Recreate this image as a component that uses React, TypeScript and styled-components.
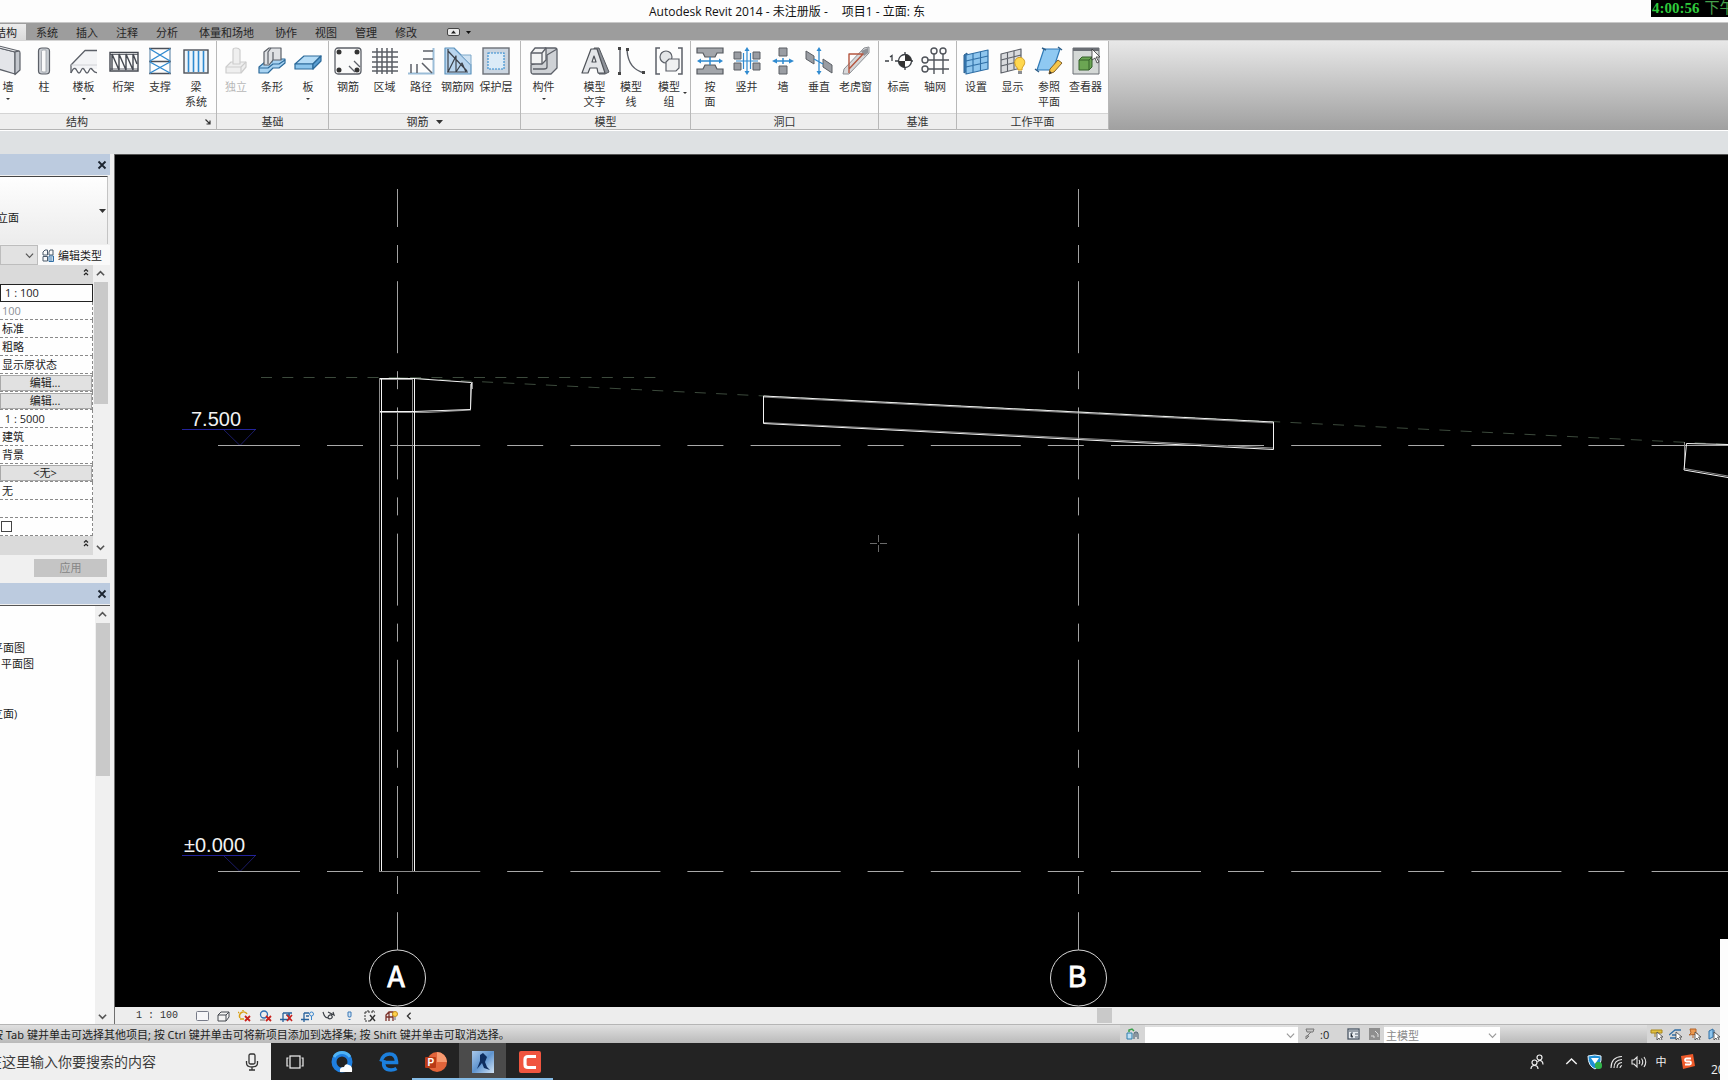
import React from "react";
import styled, { createGlobalStyle, css } from "styled-components";

const SANS = `"Open Sans", "Noto Sans CJK SC", sans-serif`;

const GlobalStyle = createGlobalStyle`
  *, *::before, *::after { box-sizing: border-box; }
  body { margin: 0; overflow: hidden; background: #dee1e3; }
  button, input, select { font: inherit; color: inherit; margin: 0; padding: 0; border: 0; border-radius: 0; background: none; }
  svg { display: block; flex: none; }
  ul, h1, h2 { margin: 0; padding: 0; list-style: none; font: inherit; }
`;

/* ---------- shell ---------- */

const Shell = styled.div`
  position: relative;
  display: grid;
  grid-template-rows: 23px 18px 90px 23px minmax(0, 1fr) 19px 37px;
  grid-template-columns: minmax(0, 1fr);
  height: 100vh;
  overflow: hidden;
  font-family: ${SANS};
  font-size: 11px;
  line-height: 15px;
  color: #333;
`;

const TitleBar = styled.header`
  display: flex;
  justify-content: center;
  align-items: center;
  gap: 14px;
  padding-right: 154px;
  background: #fdfdfd;
  border-bottom: 1px solid #c8c8c8;
  color: #111;
  font-size: 12px;
`;

const Clock = styled.div`
  position: absolute;
  top: 0;
  right: 0;
  width: 77px;
  height: 17px;
  padding-left: 1px;
  overflow: hidden;
  white-space: nowrap;
  background: #000;
  color: #2fcb3c;
  font: bold 15px/17px "Liberation Serif", "Noto Sans CJK SC", serif;
  span { margin-left: 5px; font-weight: 400; color: #46a04c; }
`;

const SideStrip = styled.div`
  position: absolute;
  right: 0;
  bottom: 0;
  width: 8px;
  height: 141px;
  background: #fdfdfd;
`;

/* ---------- ribbon tabs ---------- */

const Tabs = styled.nav`
  display: flex;
  align-items: flex-end;
  background: #9d9d9d;
  border-bottom: 1px solid #d5d5d5;
`;

const Tab = styled.button<{ $active?: boolean; $wide?: boolean }>`
  height: 16px;
  line-height: 15px;
  padding: 0 ${(p) => (p.$wide ? 12 : 9)}px;
  white-space: nowrap;
  color: #262626;
  ${(p) =>
    p.$active &&
    css`
      margin-left: -14px;
      margin-right: 1px;
      background: linear-gradient(#ececec, #dadada);
    `}
`;

const MinimizeButton = styled.button`
  display: flex;
  align-items: center;
  gap: 6px;
  height: 16px;
  padding-left: 21px;
`;

/* ---------- ribbon ---------- */

const Ribbon = styled.div`
  display: flex;
  overflow: hidden;
  background: linear-gradient(#e8e8e8, #a0a0a0);
  border-bottom: 1px solid #fff;
`;

const PanelBox = styled.section<{ $bleed?: boolean }>`
  display: flex;
  flex-direction: column;
  border-right: 1px solid #b8b8b8;
  background: #fdfdfd;
  ${(p) => p.$bleed && css`margin-left: -62px;`}
`;

const PanelBody = styled.div<{ $width: number; $end?: boolean }>`
  display: flex;
  justify-content: ${(p) => (p.$end ? "flex-end" : "flex-start")};
  width: ${(p) => p.$width}px;
  height: 72px;
  padding: 6px ${(p) => (p.$end ? 2 : 1)}px 0 1px;
`;

const PanelTitle = styled.h2`
  display: grid;
  grid-template-columns: 1fr auto 1fr;
  align-items: center;
  height: 17px;
  border-top: 1px solid #d4d4d4;
  border-bottom: 1px solid #b4b4b4;
  background: #eeeeee;
  > svg { justify-self: end; margin-right: 5px; }
`;

const PanelName = styled.span`
  display: flex;
  align-items: center;
  gap: 7px;
`;

const Tool = styled.button<{ $width: number; $dim?: boolean }>`
  position: relative;
  display: flex;
  flex: none;
  flex-direction: column;
  align-items: center;
  justify-content: flex-start;
  width: ${(p) => p.$width}px;
  white-space: pre;
  text-align: center;
  ${(p) => p.$dim && css`opacity: 0.35;`}
  > svg:first-child { margin-bottom: 4px; }
`;

const SideArrow = styled.span`
  position: absolute;
  right: 2px;
  top: 45px;
`;

const ArrowHolder = styled.span`
  display: block;
  padding-top: 4px;
`;

const Divider = styled.span`
  width: 1px;
  height: 64px;
  margin: 0 5px 0 6px;
  background: #cfcfcf;
`;

const OptionsBar = styled.div`
  background: #dee1e3;
`;

/* ---------- workspace ---------- */

const Workspace = styled.main`
  display: grid;
  grid-template-columns: 114px minmax(0, 1fr);
  min-height: 0;
`;

const Palettes = styled.aside`
  display: flex;
  flex-direction: column;
  min-height: 0;
  padding-right: 4px;
  background: #f0f0f0;
  color: #1c1c1c;
`;

const PaletteHeader = styled.div`
  display: flex;
  flex: none;
  justify-content: flex-end;
  align-items: center;
  height: 21px;
  padding-right: 3px;
  background: #bccbdf;
`;

const PlainButton = styled.button`
  display: flex;
  align-items: center;
  justify-content: center;
`;

const TypeSelector = styled.button`
  display: flex;
  flex: none;
  align-items: center;
  justify-content: space-between;
  height: 68px;
  margin: 1px 2px 0 0;
  padding: 0 1px 0 0;
  overflow: hidden;
  border-top: 1px solid #444;
  border-right: 1px solid #c4c4c4;
  background: linear-gradient(#fefefe, #ececec);
  span { margin: 14px 0 0 -3px; }
`;

const TypeRow = styled.div`
  display: flex;
  flex: none;
  height: 20px;
  margin-top: 1px;
`;

const SelectBox = styled.span<{ $width: number; $grey?: boolean }>`
  display: grid;
  flex: none;
  width: ${(p) => p.$width}px;
  align-items: center;
  background: ${(p) => (p.$grey ? "#e2e2e2" : "#fefefe")};
  border: ${(p) => (p.$grey ? "1px solid #bdbdbd" : "0")};
  color: #8a8a8a;
  select {
    grid-area: 1 / 1;
    width: 100%;
    height: 100%;
    padding-left: 2px;
    appearance: none;
  }
  svg { grid-area: 1 / 1; justify-self: end; margin-right: 3px; pointer-events: none; }
`;

const EditType = styled.button`
  display: flex;
  align-items: center;
  gap: 4px;
  flex: 1;
  padding-left: 4px;
  white-space: nowrap;
  background: #fafafa;
`;

const PropertyArea = styled.div`
  display: grid;
  flex: none;
  grid-template-columns: 93px 15px;
`;

const GroupBar = styled.button`
  display: flex;
  align-items: center;
  justify-content: flex-end;
  width: 100%;
  height: 19px;
  padding: 0 4px 5px 0;
  background: #dadada;
`;

const PropertyTable = styled.table`
  width: 100%;
  border-collapse: separate;
  border-spacing: 0;
  background: #fefefe;
  table-layout: fixed;
`;

const ValueCell = styled.td<{ $focused?: boolean; $dim?: boolean }>`
  height: 18px;
  padding: 0 0 0 2px;
  line-height: 16px;
  white-space: nowrap;
  border-bottom: 1px dashed #8a8a8a;
  border-right: 1px dashed #8a8a8a;
  color: ${(p) => (p.$dim ? "#8b8f96" : "#1c1c1c")};
  ${(p) =>
    p.$focused &&
    css`
      padding-left: 4px;
      border: 1px solid #222;
    `}
  button {
    display: block;
    width: 92px;
    height: 16px;
    margin-left: -2px;
    padding-right: 2px;
    line-height: 13px;
    border: 1px solid #a9a9a9;
    background: #e1e1e1;
  }
  input {
    display: block;
    width: 11px;
    height: 11px;
    margin-left: -1px;
    appearance: none;
    border: 1px solid #444;
    background: #fff;
  }
`;

const Scroll = styled.div<{ $thumb: number }>`
  display: flex;
  flex-direction: column;
  justify-content: space-between;
  align-items: center;
  padding: 4px 0 3px;
  background: #f0f0f0;
  i {
    width: 14px;
    height: ${(p) => p.$thumb}px;
    margin: 4px 0 auto;
    background: #c9c9c9;
  }
`;

const ApplyRow = styled.div`
  display: flex;
  flex: none;
  justify-content: flex-end;
  padding: 3px 3px 6px 0;
  margin-top: 1px;
  button {
    width: 73px;
    height: 18px;
    line-height: 16px;
    background: #c5c5c5;
    color: #868686;
  }
`;

const Browser = styled.div`
  display: grid;
  flex: 1;
  grid-template-columns: minmax(0, 1fr) 15px;
  min-height: 0;
  margin-top: 1px;
  border-top: 1px solid #555;
  background: #fefefe;
`;

const Tree = styled.ul`
  padding-top: 34px;
  overflow: hidden;
  white-space: nowrap;
`;

const TreeItem = styled.li<{ $shift: number; $gap?: boolean }>`
  height: 16px;
  margin-left: ${(p) => p.$shift}px;
  margin-top: ${(p) => (p.$gap ? 34 : 0)}px;
  line-height: 16px;
`;

const ViewArea = styled.div`
  display: grid;
  grid-template-rows: minmax(0, 1fr) 17px;
  min-height: 0;
  border-left: 1px solid #6f6f6f;
`;

const Canvas = styled.svg`
  width: 100%;
  height: 100%;
  border-top: 1px solid #555;
  background: #000;
`;

const ViewBar = styled.div`
  display: flex;
  align-items: center;
  padding-left: 21px;
  background: #ededed;
`;

const ScaleButton = styled.button`
  width: 56px;
  text-align: left;
  white-space: pre;
  font: 10px/14px "Liberation Mono", monospace;
`;

const ViewButton = styled.button<{ $narrow?: boolean }>`
  display: flex;
  justify-content: center;
  align-items: center;
  width: ${(p) => (p.$narrow ? 13 : 21)}px;
  height: 16px;
`;

const HScroll = styled.div`
  flex: 1;
  height: 15px;
  padding-left: 682px;
  i { display: block; width: 15px; height: 15px; background: #c9c9c9; }
`;

/* ---------- status bar ---------- */

const StatusBar = styled.footer`
  display: flex;
  align-items: stretch;
  border-top: 1px solid #b5b5b5;
  background: linear-gradient(#e0e0e0, #bababa);
  color: #1c1c1c;
`;

const Hint = styled.span`
  flex: 1;
  margin-left: -8px;
  font-family: "Noto Sans", "Noto Sans CJK SC", sans-serif;
  line-height: 19px;
  white-space: nowrap;
`;

const StatusTools = styled.div`
  display: flex;
  align-items: center;
  padding-right: 5px;
`;

const StatusButton = styled.button<{ $width?: number; $start?: boolean }>`
  display: flex;
  justify-content: ${(p) => (p.$start ? "flex-start" : "center")};
  align-items: center;
  gap: 4px;
  width: ${(p) => p.$width ?? 19}px;
  height: 18px;
  padding-left: ${(p) => (p.$start ? 5 : 0)}px;
  background: #d6d6d6;
`;

const StatusSelect = styled(SelectBox)`
  height: 16px;
  align-self: flex-end;
`;

const Spacer = styled.span`
  width: 147px;
`;

/* ---------- taskbar ---------- */

const Taskbar = styled.div`
  display: flex;
  background: #232323;
  overflow: hidden;
`;

const Search = styled.label`
  display: flex;
  align-items: center;
  width: 271px;
  padding-right: 12px;
  background: #efefef;
  input {
    flex: 1;
    min-width: 0;
    margin-left: -12px;
    font-size: 14px;
    line-height: 20px;
    outline: 0;
  }
  input::placeholder { color: #3b3b3b; opacity: 1; }
`;

const TaskButton = styled.button<{ $active?: boolean; $running?: boolean }>`
  display: flex;
  justify-content: center;
  align-items: center;
  width: 47px;
  border-top: 2px solid transparent;
  background: ${(p) => (p.$active ? "#4b4b4b" : "transparent")};
  border-bottom: 2px solid ${(p) => (p.$running ? "#86bce6" : "transparent")};
`;

const Tray = styled.div`
  display: flex;
  align-items: center;
  margin-left: auto;
  color: #f0f0f0;
`;

const TrayButton = styled.button<{ $width: number }>`
  display: flex;
  justify-content: center;
  align-items: center;
  width: ${(p) => p.$width}px;
  height: 36px;
`;

const DateText = styled.span`
  align-self: flex-end;
  width: 17px;
  margin-left: 9px;
  overflow: hidden;
  font-size: 12px;
  line-height: 20px;
`;

/* ---------- small glyphs ---------- */

const Caret = ({ w = 5, color = "#333" }: { w?: number; color?: string }) => (
  <svg width={w} height={Math.ceil(w / 2)} viewBox="0 0 10 5" preserveAspectRatio="none">
    <path d="M0 0H10L5 5Z" fill={color} />
  </svg>
);

const Chevron = ({ dir = "down", size = 9, color = "#555", sw = 1.3 }: { dir?: string; size?: number; color?: string; sw?: number }) => {
  const d: Record<string, string> = {
    down: "M1 3L5 7L9 3",
    up: "M1 7L5 3L9 7",
    left: "M7 1L3 5L7 9",
  };
  return (
    <svg width={size} height={size} viewBox="0 0 10 10" fill="none" stroke={color} strokeWidth={sw}>
      <path d={d[dir]} />
    </svg>
  );
};

const Cross = () => (
  <svg width="10" height="10" viewBox="0 0 10 10" stroke="#1b2430" strokeWidth="1.8">
    <path d="M1.5 1.5L8.5 8.5M8.5 1.5L1.5 8.5" />
  </svg>
);

const DoubleUp = () => (
  <svg width="6" height="8" viewBox="0 0 6 8" fill="none" stroke="#222" strokeWidth="1.2">
    <path d="M1 3.5L3 1.5L5 3.5M1 7L3 5L5 7" />
  </svg>
);

/* ---------- ribbon icons ---------- */

const G = "#5c6068";
const B = "#2f8ad0";
const icons: Record<string, React.ReactNode> = {
  wall: (
    <g stroke={G} strokeWidth="1.2" strokeLinejoin="round">
      <path d="M1 0L21 5V27L1 21Z" fill="#e3e5e9" />
      <path d="M1 0L5 -1L25 4L21 5Z" fill="#f6f7f8" />
      <path d="M21 5L25 4Q26 4 26 6V23L21 27.5Z" fill="#c3c7cd" />
    </g>
  ),
  column: (
    <g stroke={G} strokeWidth="1.2">
      <path d="M8.500 4Q8.500 1 12 1H16Q19.500 1 19.500 4V24Q19.500 27 16 27H12Q8.500 27 8.500 24Z" fill="#c9cdd2" />
      <path d="M11.500 4.500Q11.500 3 13 3H16V25H13Q11.500 25 11.500 23.500Z" fill="#fafafa" stroke="#9a9ea5" strokeWidth="0.8" />
    </g>
  ),
  floor: (
    <g stroke={G} strokeWidth="1.3" fill="none" strokeLinejoin="round">
      <path d="M15 4L2 18V22H27V4Z" fill="#f3f4f6" stroke="none" />
      <path d="M27 3.5H15L1 18V26" />
      <path d="M1 26C2 24 3 21 5 21.500S7 26 9 26S11 21 13 21.500S15 26 17 26S19 21 21 21.500S23 26 27 25.500" />
      <path d="M1 18H27" stroke="#c6c9ce" strokeWidth="0.8" />
    </g>
  ),
  truss: (
    <g stroke="#444850" strokeWidth="1.4" fill="none">
      <path d="M0 5.500H28V24H0Z" fill="#fafafa" />
      <path d="M0 7.500H28M0 22H28" strokeWidth="0.8" />
      <path d="M2 7L9 23V7L16 23V7L23 23V7L27 17M2 7V23" />
    </g>
  ),
  brace: (
    <g fill="none">
      <path d="M3 1.5H25M3 14.5H25M3 26.5H25" stroke="#4b5058" strokeWidth="1.5" />
      <path d="M4 1V27M24 1V27" stroke="#6b90b0" strokeWidth="1.2" />
      <path d="M4 2L24 14M24 2L4 14M4 15L24 26M24 15L4 26" stroke={B} strokeWidth="1.4" />
    </g>
  ),
  beamSystem: (
    <g fill="none">
      <rect x="2" y="3" width="24" height="23" fill="#eef5fb" stroke="#4b5058" strokeWidth="1.4" />
      <path d="M6.5 4V25M11.5 4V25M16.5 4V25M21.5 4V25" stroke={B} strokeWidth="1.6" />
    </g>
  ),
  isolated: (
    <g stroke="#777" strokeWidth="1.2" fill="#d8d8d8" strokeLinejoin="round">
      <path d="M4 20L9 15H24V20L19 26H4Z" />
      <path d="M4 20H19L24 15M19 20V26" fill="none" />
      <path d="M11 3Q11 1 14 1T18 3V17H11Z" />
    </g>
  ),
  strip: (
    <g strokeWidth="1.2" strokeLinejoin="round">
      <path d="M1 20L7 15H14V12H27V16L21 21H15L10 26H1Z" fill="#a8d3f2" stroke="#2c6a9a" />
      <path d="M1 21H10L15 17H21L27 13" fill="none" stroke="#2c6a9a" />
      <path d="M6 5L11 1H23V13H15L11 18H6Z" fill="#dfe1e4" stroke={G} />
      <path d="M13 1L10 5V17M15 5V13" fill="none" stroke={G} />
    </g>
  ),
  slab: (
    <g stroke="#2c6a9a" strokeWidth="1.2" strokeLinejoin="round">
      <path d="M1 17L10 9H27L19 17Z" fill="#b5dcf6" />
      <path d="M1 17H19V22H1Z" fill="#8cc5ec" />
      <path d="M19 17L27 9V14L19 22Z" fill="#5b9fd2" />
    </g>
  ),
  rebar: (
    <g stroke={G} strokeWidth="1.3" fill="none">
      <rect x="1" y="1" width="26" height="26" rx="3" fill="#fafafa" />
      <g fill="#333" stroke="none">
        <circle cx="5" cy="5" r="2.5" /><circle cx="23" cy="5" r="2.5" />
        <circle cx="5" cy="23" r="2.5" /><circle cx="23" cy="23" r="2.5" />
      </g>
      <path d="M15 19L21 25M20 14L26 20" />
    </g>
  ),
  area: (
    <path d="M6 1V27M11 1V27M16 1V27M21 1V27M1 5H27M1 10H27M1 15H27M1 20H27M1 24H27" stroke="#5b5f66" strokeWidth="1.5" />
  ),
  path: (
    <g fill="none">
      <path d="M26.5 1V26.5H1" stroke="#9bbdd8" strokeWidth="2" />
      <path d="M4 17V26M10 17V26M16 4H26M16 12H26M15 16L25 26" stroke={G} strokeWidth="1.5" />
    </g>
  ),
  fabric: (
    <g strokeLinejoin="round">
      <path d="M1 1H10L27 18V27H1Z" fill="#b9d5ee" stroke="#5d93bd" strokeWidth="1.2" />
      <path d="M17 8H27V18Z" fill="#cfe2f2" stroke="#7fa9ca" />
      <path d="M4 2V25M4 4L23 24M4 25L12 9V25L18 16L22 25M3 25H24" stroke="#3b4049" strokeWidth="1.2" fill="none" />
    </g>
  ),
  cover: (
    <g>
      <rect x="1" y="1" width="26" height="26" fill="#cbd5e0" stroke="#6c7077" strokeWidth="1.4" />
      <rect x="6" y="6" width="16" height="16" fill="#dcebf7" stroke={B} strokeWidth="1.1" strokeDasharray="2 1" />
    </g>
  ),
  component: (
    <g stroke={G} strokeWidth="1.3" strokeLinejoin="round">
      <path d="M13 5Q13 1 17 1H25Q27 1 27 3V21L21 27H3Q1 27 1 24V18L13 14Z" fill="#cfd2d6" />
      <path d="M1 6L5 1H16V13L12 17H1Z" fill="#f2f3f4" />
      <path d="M1 6H12V17M12 6L16 1M17 8L27 2M17 8V20Q17 22 14 22H3" fill="none" />
    </g>
  ),
  modelText: (
    <g strokeLinejoin="round">
      <path d="M13 1H18L28 25L24 27H18Z" fill="#8e9299" stroke="#55595f" />
      <path d="M10 2H16L24 26H17L16 21H9L7 26H1ZM11 15H15L13 9Z" fill="#e3e5e8" stroke="#4d5157" strokeWidth="1.2" fillRule="evenodd" />
    </g>
  ),
  modelLine: (
    <g fill="none" stroke={G} strokeWidth="1.4">
      <path d="M3 2V26M10 3C11 17 17 23 27 26" />
      <g fill="#444" stroke="none">
        <rect x="1" y="0" width="3" height="3" /><rect x="1" y="25" width="3" height="3" />
        <rect x="9" y="1" width="3" height="3" /><rect x="25" y="24" width="3" height="3" />
      </g>
    </g>
  ),
  modelGroup: (
    <g fill="none" stroke={G} strokeWidth="1.5">
      <path d="M5 1H1V27H5M23 1H27V27H23" />
      <circle cx="11" cy="10" r="6" fill="#e4e6e8" strokeWidth="1.2" />
      <path d="M11 15L14 12H24V21L21 24H11Z" fill="#f0f1f2" strokeWidth="1.2" />
    </g>
  ),
  byFace: (
    <g>
      <path d="M1 1H27V6H21L19 10H9L7 6H1ZM1 27H27V22H21L19 18H9L7 22H1Z" fill="#a3a6ab" stroke="#55595f" strokeWidth="1.2" />
      <path d="M3 14H25M14 10V18" stroke={B} strokeWidth="1.5" />
      <path d="M1 14L5 11.5V16.5ZM27 14L23 11.5V16.5Z" fill={B} />
    </g>
  ),
  shaft: (
    <g>
      <path d="M1 5H8V12H1ZM20 5H27V12H20ZM1 16H8V23H1ZM20 16H27V23H20Z" fill="#9a9da3" stroke="#5a5e64" />
      <path d="M14 2V26M3 14H25M10.5 6V22M17.5 6V22" stroke={B} strokeWidth="1.2" />
      <path d="M14 0L11.5 4H16.5ZM14 28L11.5 24H16.5Z" fill={B} />
    </g>
  ),
  wallOpening: (
    <g>
      <path d="M10 1H18V9H10ZM10 19H18V27H10Z" fill="#9a9da3" stroke="#5a5e64" />
      <path d="M5 14H23M14 11V17" stroke={B} strokeWidth="1.5" />
      <path d="M3 14L8 11.5V16.5ZM25 14L20 11.5V16.5Z" fill={B} />
    </g>
  ),
  vertical: (
    <g>
      <path d="M1 4L9 9V17L1 12ZM18 12L27 18V26L18 20Z" fill="#9a9da3" stroke="#5a5e64" />
      <path d="M14 3V25M9 12L18 17" stroke={B} strokeWidth="1.3" />
      <path d="M14 0L11.5 4H16.5ZM14 28L11.5 24H16.5Z" fill={B} />
    </g>
  ),
  dormer: (
    <g strokeLinejoin="round">
      <path d="M1 27L2 22L22 1L27 0V6L7 27Z" fill="#d7d8da" stroke="#8b8e93" />
      <path d="M19 4L26 1V6L22 9Z" fill="#8f9298" />
      <path d="M7 26V7H21L7 22" fill="none" stroke="#b4553f" strokeWidth="1.4" />
    </g>
  ),
  level: (
    <g stroke="#3c4046" strokeWidth="1.3">
      <path d="M0 14H4M10 14H28M20 5V23" />
      <path d="M5 10L7 8.5V14" fill="none" />
      <circle cx="20" cy="14" r="6.5" fill="#fff" />
      <path d="M20 14V7.5A6.5 6.5 0 0 1 26.5 14ZM20 14V20.5A6.5 6.5 0 0 1 13.5 14Z" fill="#333" stroke="none" />
    </g>
  ),
  grid: (
    <g fill="none" stroke="#50545b" strokeWidth="1.4">
      <path d="M13 7V27M22 7V27M7 13H28M7 22H28" />
      <circle cx="13" cy="4" r="3" /><circle cx="22" cy="4" r="3" />
      <circle cx="4" cy="13" r="3" /><circle cx="4" cy="22" r="3" />
    </g>
  ),
  planeSet: (
    <g strokeLinejoin="round">
      <path d="M2 8L5 6V24L2 26Z" fill="#3c7fb8" stroke="#2a5f8e" />
      <path d="M4 8L26 3V22L4 27Z" fill="#8fc6ee" stroke="#2f6ea5" strokeWidth="1.2" />
      <path d="M11 6V25M18.5 5V24M4 14L26 9M4 20L26 15" stroke="#2f6ea5" strokeWidth="1.1" />
    </g>
  ),
  planeShow: (
    <g strokeLinejoin="round">
      <path d="M2 7L22 2V21L2 26Z" fill="#d9dbde" stroke="#5c6068" strokeWidth="1.2" />
      <path d="M8.5 5V24M15 4V22M2 13L22 8M2 19L22 14" stroke="#5c6068" strokeWidth="1.1" />
      <path d="M16 17A5 5 0 1 1 25 18C24 20 23 20 23 23H19C19 20 16 20 16 17Z" fill="#ffd84f" stroke="#d29d22" />
      <path d="M19 24H23V27H19Z" fill="#8b8e93" />
    </g>
  ),
  refPlane: (
    <g strokeLinejoin="round">
      <path d="M9 2H25L18 23H2Z" fill="#8fc9f2" stroke="#2f79b5" strokeWidth="1.2" />
      <path d="M7 1L11 3M23 0L27 3M0 22L4 25" stroke="#2f5f88" strokeWidth="1.4" />
      <path d="M14 27L15 22L23 13L27 16L19 25Z" fill="#f6c64a" stroke="#80602a" />
      <path d="M14 27L15 24L17 26Z" fill="#333" />
    </g>
  ),
  viewer: (
    <g strokeLinejoin="round">
      <rect x="1" y="1" width="26" height="26" fill="#d4d8d6" stroke="#6a6e74" />
      <path d="M1 1H27V4H1Z" fill="#6a6e74" />
      <path d="M7 13L10 10H20V20L17 23H7Z" fill="#6ba553" stroke="#35602a" />
      <path d="M7 13H17V23M17 13L20 10" fill="none" stroke="#35602a" />
      <path d="M20 2L28 10H24L27 15L25 16L23 11L20 13Z" fill="#fff" stroke="#333" strokeWidth="0.8" />
    </g>
  ),
};

type ToolDef = { icon: string; label: string; w?: number; arrow?: boolean; side?: boolean; dim?: boolean; divide?: boolean };

const ToolButton = ({ t }: { t: ToolDef }) => (
  <>
    <Tool $width={t.w ?? 36} $dim={t.dim} disabled={t.dim}>
      <svg width="28" height="28" viewBox="0 0 28 28" overflow="visible">{icons[t.icon]}</svg>
      {t.label}
      {t.arrow && <ArrowHolder><Caret w={4} /></ArrowHolder>}
      {t.side && <SideArrow><Caret w={4} /></SideArrow>}
    </Tool>
    {t.divide && <Divider />}
  </>
);

const panels: { title: string; width: number; bleed?: boolean; corner?: boolean; menu?: boolean; tools: ToolDef[] }[] = [
  {
    title: "结构", width: 278, bleed: true, corner: true,
    tools: [
      { icon: "wall", label: "墙", w: 36, arrow: true },
      { icon: "column", label: "柱", w: 36 },
      { icon: "floor", label: "楼板", w: 43, arrow: true },
      { icon: "truss", label: "桁架", w: 37 },
      { icon: "brace", label: "支撑" },
      { icon: "beamSystem", label: "梁\n系统" },
    ],
  },
  {
    title: "基础", width: 111,
    tools: [
      { icon: "isolated", label: "独立", dim: true },
      { icon: "strip", label: "条形" },
      { icon: "slab", label: "板", arrow: true },
    ],
  },
  {
    title: "钢筋", width: 191, menu: true,
    tools: [
      { icon: "rebar", label: "钢筋" },
      { icon: "area", label: "区域", w: 37 },
      { icon: "path", label: "路径" },
      { icon: "fabric", label: "钢筋网", w: 37 },
      { icon: "cover", label: "保护层", w: 40 },
    ],
  },
  {
    title: "模型", width: 169,
    tools: [
      { icon: "component", label: "构件", w: 43, arrow: true, divide: true },
      { icon: "modelText", label: "模型\n文字", w: 37 },
      { icon: "modelLine", label: "模型\n线" },
      { icon: "modelGroup", label: "模型\n组", w: 40, side: true },
    ],
  },
  {
    title: "洞口", width: 187,
    tools: [
      { icon: "byFace", label: "按\n面" },
      { icon: "shaft", label: "竖井", w: 37 },
      { icon: "wallOpening", label: "墙" },
      { icon: "vertical", label: "垂直" },
      { icon: "dormer", label: "老虎窗", w: 37 },
    ],
  },
  {
    title: "基准", width: 77,
    tools: [
      { icon: "level", label: "标高", w: 37 },
      { icon: "grid", label: "轴网" },
    ],
  },
  {
    title: "工作平面", width: 151,
    tools: [
      { icon: "planeSet", label: "设置" },
      { icon: "planeShow", label: "显示", w: 37 },
      { icon: "refPlane", label: "参照\n平面" },
      { icon: "viewer", label: "查看器", w: 37 },
    ],
  },
];

const tabs = ["系统", "插入", "注释", "分析", "体量和场地", "协作", "视图", "管理", "修改"];

/* ---------- properties ---------- */

type Row = { kind: "text" | "button" | "check"; value: string; focused?: boolean; dim?: boolean };
const rows: Row[] = [
  { kind: "text", value: "1 : 100", focused: true },
  { kind: "text", value: "100", dim: true },
  { kind: "text", value: "标准" },
  { kind: "text", value: "粗略" },
  { kind: "text", value: "显示原状态" },
  { kind: "button", value: "编辑..." },
  { kind: "button", value: "编辑..." },
  { kind: "text", value: "\u00a01 : 5000" },
  { kind: "text", value: "建筑" },
  { kind: "text", value: "背景" },
  { kind: "button", value: "<无>" },
  { kind: "text", value: "无" },
  { kind: "text", value: "" },
  { kind: "check", value: "裁剪" },
];

const Properties = () => (
  <>
    <PaletteHeader><PlainButton aria-label="关闭"><Cross /></PlainButton></PaletteHeader>
    <TypeSelector><span>立面</span><Caret w={7} /></TypeSelector>
    <TypeRow>
      <SelectBox $width={38} $grey>
        <select aria-label="类型"><option></option></select>
        <Chevron />
      </SelectBox>
      <EditType>
        <svg width="12" height="13" viewBox="0 0 12 13" fill="none" stroke="#4b5a6b">
          <path d="M1 3L3 1H5.5V6H1ZM7 3L8 1H11V6H7ZM1 7.5H5.5V12H1Z" />
          <path d="M7 7H11.5V12.5H7ZM8 9H10.5M8 11H10.5" stroke="#2f6ea5" />
        </svg>
        编辑类型
      </EditType>
    </TypeRow>
    <PropertyArea>
      <div>
        <GroupBar aria-label="图形"><DoubleUp /></GroupBar>
        <PropertyTable>
          <tbody>
            {rows.map((r, i) => (
              <tr key={i}>
                <ValueCell $focused={r.focused} $dim={r.dim}>
                  {r.kind === "text" && r.value}
                  {r.kind === "button" && <button>{r.value}</button>}
                  {r.kind === "check" && <input type="checkbox" aria-label={r.value} />}
                </ValueCell>
              </tr>
            ))}
          </tbody>
        </PropertyTable>
        <GroupBar aria-label="范围"><DoubleUp /></GroupBar>
      </div>
      <Scroll $thumb={122}><Chevron dir="up" sw={1.8} /><i /><Chevron sw={1.8} /></Scroll>
    </PropertyArea>
    <ApplyRow><button disabled>应用</button></ApplyRow>
  </>
);

const ProjectBrowser = () => (
  <>
    <PaletteHeader><PlainButton aria-label="关闭"><Cross /></PlainButton></PaletteHeader>
    <Browser>
      <Tree>
        <TreeItem $shift={-8}>平面图</TreeItem>
        <TreeItem $shift={1}>平面图</TreeItem>
        <TreeItem $shift={-8} $gap>立面)</TreeItem>
      </Tree>
      <Scroll $thumb={153}><Chevron dir="up" sw={1.8} /><i /><Chevron sw={1.8} /></Scroll>
    </Browser>
  </>
);

/* ---------- drawing ---------- */

const LevelMark = ({ y, label, x }: { y: number; label: string; x: number }) => (
  <g>
    <text x={x} y={y - 20} fill="#f2f2f2" fontFamily="Liberation Sans, Arial, sans-serif" fontSize="20">{label}</text>
    <path d={`M182 ${y - 16.5}H256`} stroke="#23239a" />
    <path d={`M224 ${y - 16}L240 ${y - 0.5}L255 ${y - 16}`} stroke="#1b1b66" fill="none" />
    <path d={`M218 ${y - 0.5}H1900`} stroke="#a9a9a9" strokeDasharray="90 27 36 27.2" strokeDashoffset="8" />
  </g>
);

const GridLine = ({ x, label }: { x: number; label: string }) => (
  <g>
    <path d={`M${x + 0.5} 189V950`} stroke="#a2a2a2" strokeDasharray="72 18 18 18.2" strokeDashoffset="34" />
    <circle cx={x + 0.5} cy="978" r="28" fill="none" stroke="#d8d8d8" />
    <text x={x - 1} y="987" textAnchor="middle" fill="#fff" stroke="#fff" strokeWidth="0.8" fontFamily="Liberation Sans Narrow, Noto Sans CJK SC, sans-serif" fontSize="29">{label}</text>
  </g>
);

const Elevation = () => (
  <Canvas role="img" aria-label="立面: 东">
    <g transform="translate(-115 -155)">
      <path d="M261 377.5H660" stroke="#3c4a3c" strokeDasharray="11 10.3" />
      <path d="M397 377.5L1728 444.5" stroke="#3c4a3c" strokeDasharray="11 10.3" />
      <LevelMark y={446} label="7.500" x={191} />
      <LevelMark y={872} label="±0.000" x={184} />
      <GridLine x={397} label="A" />
      <GridLine x={1078} label="B" />
      <g fill="none" stroke="#8c8c8c">
        <path d="M379.5 378V871M412.5 378V871" />
        <path d="M380 379.5H412M380 412.5H428L471 410M472.5 382V389M470.5 384V409M379 871.5H480" />
        <path d="M763 397L1273 423M763 422.5L1273 448" />
        <path d="M1684.5 442V469M1684 468.5L1728 476" />
      </g>
      <g fill="none" stroke="#f4f4f4">
        <path d="M381.5 378V871M414.5 378V871" />
        <path d="M380 378.5H414L471.5 382.5L470.5 409.5L414 411.5H380" />
        <path d="M763.5 396L1273.5 422V449.5L763.5 423.5Z" />
        <path d="M1728 444.5L1686.5 443.5L1684 470L1728 477.5" />
      </g>
      <path d="M870 543.5H877M880 543.5H887M878.5 535V542M878.5 545V552" stroke="#6a6a6a" />
    </g>
  </Canvas>
);

/* ---------- view bar and status icons ---------- */

const viewIcons: { name: string; art: React.ReactNode }[] = [
  { name: "详细程度", art: <rect x="0.5" y="1.5" width="12" height="9" rx="1" fill="#f6f6f8" stroke="#777b88" /> },
  { name: "视觉样式", art: <path d="M1 5L4 2H12V7L9 11H1ZM1 5H9V11M9 5L12 2" fill="#f4f4f4" stroke="#44484f" /> },
  { name: "日光路径", art: <g fill="none"><path d="M2 8A4 4 0 1 1 9 4M2 9H6M1 3L0 2M5 0V1" stroke="#d9a015" strokeWidth="1.5" /><path d="M7 6L12 11M12 6L7 11" stroke="#c8201c" strokeWidth="1.8" /></g> },
  { name: "阴影", art: <g fill="none"><circle cx="5" cy="4.5" r="3.5" stroke="#2f6fb3" strokeWidth="1.3" /><path d="M1 10H6" stroke="#777" /><path d="M7 6L12 11M12 6L7 11" stroke="#c8201c" strokeWidth="1.8" /></g> },
  { name: "裁剪视图", art: <g fill="none"><path d="M0 9.500H9V3M3 3V12M3 3H12M6 5H10" stroke="#28629c" strokeWidth="1.3" /><path d="M7 5L12 11M12 5L7 11" stroke="#c8201c" strokeWidth="1.6" /></g> },
  { name: "显示裁剪区域", art: <g fill="none"><path d="M0 9.500H8M3 3V12M3 3H8M5 6H8" stroke="#28629c" strokeWidth="1.3" /><circle cx="10.500" cy="4" r="2" stroke="#3b86cc" /><path d="M10.500 6V10" stroke="#3b86cc" /></g> },
  { name: "临时隐藏", art: <path d="M1 2C2 6 4 8 6 8C6 5 9 4 10 6S8 10 6 8M6 2L12 5L11 2" fill="none" stroke="#3c4046" strokeWidth="1.2" /> },
  { name: "显示隐藏", art: <g fill="none" stroke="#3b78b6"><path d="M5 2H8V6L7.500 7H5.500L5 6Z" fill="#cfe3f5" /><path d="M5.5 9.500H7.5" /></g> },
  { name: "临时视图属性", art: <g fill="none" stroke="#333"><path d="M1 2H11M1 2V11H6M4 0V3M9 0V3" strokeDasharray="2 1" /><path d="M6 5L11 11M11 5L6 11" strokeWidth="1.4" /></g> },
  { name: "分析模型", art: <g fill="none"><path d="M1 11V5L4 2H8V11M4 2V11M1 7H8" stroke="#7a3028" strokeWidth="1.3" /><circle cx="10" cy="4" r="2.5" fill="#ffd34d" stroke="#c58e18" /><path d="M10 7V10" stroke="#666" /></g> },
];

const SmallIcon = ({ children }: { children: React.ReactNode }) => (
  <svg width="13" height="12" viewBox="0 0 13 12">{children}</svg>
);

const Cursor = <path d="M7 4V12L9 10L10.5 12.5L12 11.5L10.5 9H13Z" fill="#fff" stroke="#444" strokeWidth="0.8" />;

const Status = () => (
  <StatusBar>
    <Hint>按 Tab 键并单击可选择其他项目; 按 Ctrl 键并单击可将新项目添加到选择集; 按 Shift 键并单击可取消选择。</Hint>
    <StatusTools>
      <StatusButton aria-label="工作集" $width={25}>
        <SmallIcon><path d="M1 5H6V11H1Z" fill="#bfe0f4" stroke="#2f7fae" /><path d="M3 4V2L6 1L8 3" fill="none" stroke="#39a04a" strokeWidth="1.5" /><path d="M8 11V6A2 2 0 0 1 12 6V11M10 5V9" fill="none" stroke="#3f5568" /></SmallIcon>
      </StatusButton>
      <StatusSelect $width={153}>
        <select aria-label="活动工作集"><option></option></select><Chevron color="#999" />
      </StatusSelect>
      <StatusButton aria-label="可编辑项" $width={44} $start>
        <SmallIcon><path d="M3 1H11L10 4H4ZM8 4L4 8M3 8H6L3 11Z" fill="#c6c6c6" stroke="#777" /></SmallIcon>
        :0
      </StatusButton>
      <StatusButton aria-label="设计选项" $width={22}>
        <SmallIcon><rect x="1" y="1" width="11" height="10" fill="#e7ebef" stroke="#4a5664" strokeWidth="1.3" /><path d="M2 3H11M4 5H6M4 5V9H6M8 6H11M8 9H11" stroke="#4a5664" /></SmallIcon>
      </StatusButton>
      <StatusButton aria-label="添加到集" $width={20}>
        <SmallIcon><rect x="1" y="0" width="11" height="12" fill="#8e8e8e" /><path d="M3 8H6V10M7 3L10 6V9" stroke="#dedede" fill="none" /></SmallIcon>
      </StatusButton>
      <StatusSelect $width={116}>
        <select aria-label="设计选项集"><option>主模型</option></select><Chevron color="#999" />
      </StatusSelect>
      <Spacer />
      <StatusButton aria-label="选择链接"><SmallIcon><path d="M1 2H12V5H1Z" fill="#e3c23f" stroke="#a8861c" /><path d="M5 5V9" stroke="#a8861c" />{Cursor}</SmallIcon></StatusButton>
      <StatusButton aria-label="选择基线图元"><SmallIcon><path d="M0 7L6 2H12M3 7H8M1 10H7" stroke="#2f6ea5" strokeWidth="1.3" fill="none" />{Cursor}</SmallIcon></StatusButton>
      <StatusButton aria-label="选择锁定图元"><SmallIcon><path d="M2 1H8V6H10L1 7L3 5ZM5 6V10" fill="#ee9a4f" stroke="#b5652a" />{Cursor}</SmallIcon></StatusButton>
      <StatusButton aria-label="按面选择图元"><SmallIcon><path d="M2 3L6 1V9L2 11Z" fill="#8fc6ee" stroke="#2f6ea5" /><path d="M7 2V6" stroke="#2f6ea5" />{Cursor}</SmallIcon></StatusButton>
    </StatusTools>
  </StatusBar>
);

const Desktop = () => (
  <Taskbar>
    <Search>
      <input placeholder="在这里输入你要搜索的内容" aria-label="搜索" />
      <svg width="14" height="18" viewBox="0 0 14 18" fill="none" stroke="#333" strokeWidth="1.3">
        <rect x="4" y="1" width="6" height="10" rx="1.5" /><path d="M1.5 8V10Q1.5 14 7 14T12.5 10V8M7 14V17M4 17H10" />
      </svg>
    </Search>
    <TaskButton aria-label="任务视图">
      <svg width="18" height="14" viewBox="0 0 18 14" fill="none" stroke="#f2f2f2" strokeWidth="1.2">
        <rect x="4" y="1" width="10" height="12" /><path d="M2.5 3H1V11H2.5M15.5 3H17V11H15.5" />
      </svg>
    </TaskButton>
    <TaskButton aria-label="浏览器">
      <svg width="22" height="22" viewBox="0 0 22 22">
        <circle cx="11" cy="11" r="8" fill="none" stroke="#1f7fe0" strokeWidth="5" />
        <path d="M3 6A9.5 9.5 0 0 1 19 6" fill="none" stroke="#4fb3f5" strokeWidth="3" />
        <path d="M9 21Q8 16 13 16Q14 12 18 14Q22 15 21 21Z" fill="#fff" />
      </svg>
    </TaskButton>
    <TaskButton aria-label="Edge">
      <svg width="20" height="20" viewBox="0 0 20 20" fill="none" stroke="#1c7fdc" strokeWidth="3.6">
        <path d="M2 9.5Q4 2 10.5 2T17.5 9.5V10.5H6" />
        <path d="M5 8Q3 18 12 18Q15 18 17.5 16.5" />
      </svg>
    </TaskButton>
    <TaskButton aria-label="PowerPoint" $running>
      <svg width="24" height="22" viewBox="0 0 24 22">
        <circle cx="13" cy="11" r="10" fill="#e2643a" /><path d="M13 1A10 10 0 0 1 23 11H13Z" fill="#f79a70" />
        <rect x="1" y="6" width="11" height="11" rx="1" fill="#b93a17" />
        <text x="3.5" y="15" fontFamily="Liberation Sans, sans-serif" fontWeight="bold" fontSize="10" fill="#fff">P</text>
      </svg>
    </TaskButton>
    <TaskButton aria-label="Revit" $active $running>
      <svg width="22" height="22" viewBox="0 0 22 22">
        <defs><linearGradient id="rv" x1="0" y1="0" x2="1" y2="1"><stop offset="0" stopColor="#a9c8ea" /><stop offset="0.5" stopColor="#5f94cf" /><stop offset="1" stopColor="#d2e4f5" /></linearGradient></defs>
        <rect width="22" height="22" fill="url(#rv)" />
        <path d="M8 4L11 2L15 6L13 11L15 16L18 19L12 17L10 12L5 18L8 10Z" fill="#0d2c5e" />
      </svg>
    </TaskButton>
    <TaskButton aria-label="Camtasia" $running>
      <svg width="22" height="22" viewBox="0 0 22 22">
        <rect width="22" height="22" rx="2" fill="#f0553f" />
        <path d="M17 5.5H9Q6 5.5 6 8.5V13.5Q6 16.5 9 16.5H17" fill="none" stroke="#fff" strokeWidth="3.2" />
      </svg>
    </TaskButton>
    <Tray>
      <TrayButton aria-label="人脉" $width={46}>
        <svg width="14" height="16" viewBox="0 0 14 16" fill="none" stroke="#f0f0f0" strokeWidth="1.2">
          <circle cx="9.5" cy="3.5" r="2.5" /><path d="M7.5 8Q9.5 5.5 11.5 7Q13 8 13 10.5" /><circle cx="4.5" cy="8.5" r="2.5" /><path d="M1 15Q1 11.5 4.5 11.5T8 15" />
        </svg>
      </TrayButton>
      <TrayButton aria-label="隐藏的图标" $width={22}><Chevron dir="up" size={13} color="#f0f0f0" sw={1.1} /></TrayButton>
      <TrayButton aria-label="安全中心" $width={24}>
        <svg width="15" height="16" viewBox="0 0 15 16">
          <path d="M1 2Q8 0 14 2Q15 11 8 15Q1 12 1 2Z" fill="#1f8fd6" stroke="#e8f4fc" /><path d="M4 4H12L8 10Z" fill="#fff" /><rect x="8" y="8" width="7" height="7" rx="3" fill="#31b34a" />
        </svg>
      </TrayButton>
      <TrayButton aria-label="网络" $width={21}>
        <svg width="13" height="14" viewBox="0 0 13 14" fill="none" stroke="#e8e8e8" strokeWidth="1.1">
          <path d="M1 13Q1 2 12 1.5M4 13Q4 5 12 4.5M7 13Q7 8 12 7.5M10 13Q10 11 12 10.5" />
        </svg>
      </TrayButton>
      <TrayButton aria-label="音量" $width={23}>
        <svg width="16" height="14" viewBox="0 0 16 14" fill="none" stroke="#e8e8e8" strokeWidth="1.1">
          <path d="M1 5H3L6 2V12L3 9H1ZM8 5Q9.5 7 8 9M10.5 3.5Q13 7 10.5 10.5M13 2Q16.5 7 13 12" />
        </svg>
      </TrayButton>
      <TrayButton $width={22}>中</TrayButton>
      <TrayButton aria-label="输入法" $width={30}>
        <svg width="15" height="15" viewBox="0 0 15 15">
          <path d="M1 2L13 0L15 12L3 15Z" fill="#ee5a2a" /><path d="M11 4.5H6.5Q5 4.5 5 6T6.5 7.5H9.5Q11 7.5 11 9T9.5 10.5H5" fill="none" stroke="#fff" strokeWidth="1.8" />
        </svg>
      </TrayButton>
      <DateText>20</DateText>
    </Tray>
  </Taskbar>
);

export default function App() {
  return (
    <Shell>
      <GlobalStyle />
      <TitleBar>
        <span>Autodesk Revit 2014 - 未注册版 -</span>
        <span>项目1 - 立面: 东</span>
      </TitleBar>
      <Tabs>
        <Tab $active>结构</Tab>
        {tabs.map((t) => <Tab key={t} $wide={t.length > 2}>{t}</Tab>)}
        <MinimizeButton aria-label="最小化功能区">
          <svg width="13" height="8" viewBox="0 0 13 8"><rect x="0.5" y="0.5" width="12" height="7" rx="1.5" fill="#e9e9e9" stroke="#444" /><path d="M4 5.5L6.5 2.5L9 5.5Z" fill="#222" /></svg>
          <Caret w={5} color="#111" />
        </MinimizeButton>
      </Tabs>
      <Ribbon>
        {panels.map((p) => (
          <PanelBox key={p.title} $bleed={p.bleed}>
            <PanelBody $width={p.width} $end={p.bleed}>
              {p.tools.map((t) => <ToolButton key={t.label} t={t} />)}
            </PanelBody>
            <PanelTitle>
              <span />
              <PanelName>{p.title}{p.menu && <Caret w={7} />}</PanelName>
              {p.corner && (
                <svg width="6" height="6" viewBox="0 0 6 6" fill="none" stroke="#333" strokeWidth="1.2"><path d="M0.5 0.5L5 5M5 1.5V5H1.5" /></svg>
              )}
            </PanelTitle>
          </PanelBox>
        ))}
      </Ribbon>
      <OptionsBar />
      <Workspace>
        <Palettes>
          <Properties />
          <ProjectBrowser />
        </Palettes>
        <ViewArea>
          <Elevation />
          <ViewBar>
            <ScaleButton>1 : 100</ScaleButton>
            {viewIcons.map((v) => (
              <ViewButton key={v.name} aria-label={v.name}><SmallIcon>{v.art}</SmallIcon></ViewButton>
            ))}
            <ViewButton aria-label="折叠" $narrow><Chevron dir="left" size={8} color="#333" sw={1.6} /></ViewButton>
            <HScroll><i /></HScroll>
          </ViewBar>
        </ViewArea>
      </Workspace>
      <Status />
      <Desktop />
      <Clock>4:00:56<span>下午</span></Clock>
      <SideStrip />
    </Shell>
  );
}
